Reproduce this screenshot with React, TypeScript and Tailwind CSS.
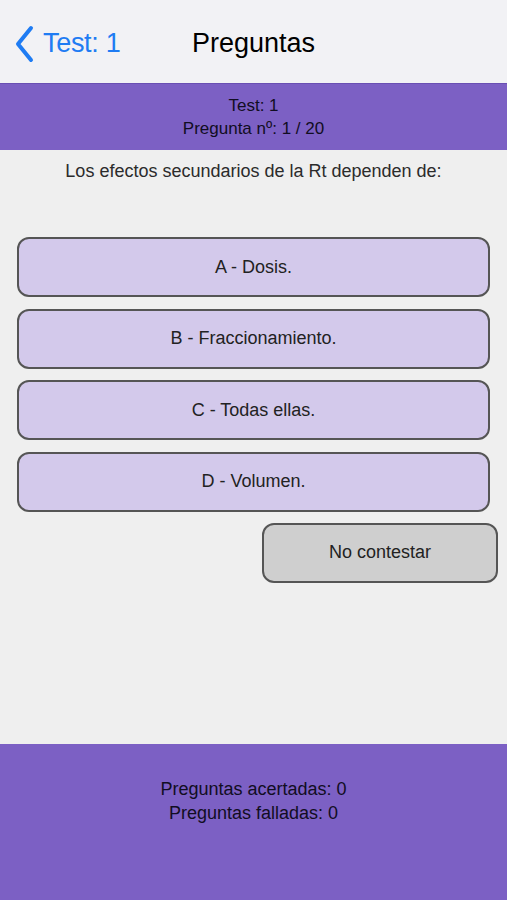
import React from "react";

const options = ["A - Dosis.", "B - Fraccionamiento.", "C - Todas ellas.", "D - Volumen."];

export default function App() {
  return (
    <div className="flex h-[900px] w-full flex-col bg-[#efefef] font-['Liberation_Sans',Arial,sans-serif]">
      {/* nav bar */}
      <div className="relative flex h-[83px] items-center bg-[#f2f2f5] pt-[4px]">
        <div className="flex items-center pl-[14px] text-[#1f7cf3]">
          <svg width="20" height="38" viewBox="0 0 20 38" fill="none">
            <path d="M17 3 L4 19 L17 35" stroke="currentColor" strokeWidth="4" strokeLinecap="round" strokeLinejoin="round" />
          </svg>
          <span className="ml-[9px] text-[27px] leading-none tracking-[-0.3px]">Test: 1</span>
        </div>
        <span className="absolute left-1/2 top-[30px] -translate-x-1/2 text-[27px] leading-none text-black">Preguntas</span>
      </div>

      {/* info band */}
      <div className="flex h-[67px] flex-col items-center justify-center border-t border-[#6a4fb3] bg-[#7c60c4] text-[17px] leading-[23px] text-[#110d22]">
        <span>Test: 1</span>
        <span>Pregunta nº: 1 / 20</span>
      </div>

      {/* body */}
      <div className="flex flex-1 flex-col">
        <p className="pt-[10px] text-center text-[18px] leading-[22px] text-[#2b2b2b]">
          Los efectos secundarios de la Rt dependen de:
        </p>
        <div className="mt-[55px] flex flex-col gap-[11.5px] px-[17px]">
          {options.map((o) => (
            <button
              key={o}
              className="flex h-[60px] items-center justify-center rounded-[12px] border-2 border-[#555] bg-[#d3c9eb] text-[18px] text-[#222]"
            >
              {o}
            </button>
          ))}
        </div>
        <div className="mt-[11px] flex justify-end pr-[9px]">
          <button className="flex h-[60px] w-[236px] items-center justify-center rounded-[12px] border-2 border-[#555] bg-[#cfcfcf] text-[18px] text-[#222]">
            No contestar
          </button>
        </div>
      </div>

      {/* footer */}
      <div className="flex h-[156px] flex-col items-center bg-[#7c60c4] pt-[33px] text-[18px] leading-[24px] text-[#110d22]">
        <span>Preguntas acertadas: 0</span>
        <span>Preguntas falladas: 0</span>
      </div>
    </div>
  );
}
